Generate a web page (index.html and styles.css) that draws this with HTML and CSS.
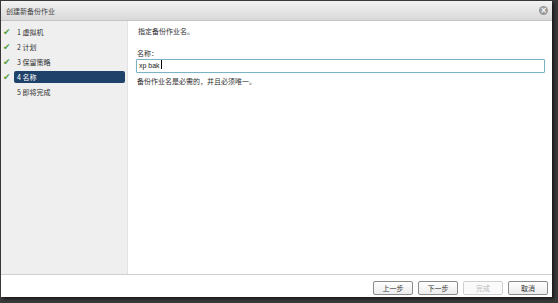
FILE: index.html
```html
<!DOCTYPE html>
<html lang="zh-CN">
<head>
  <meta charset="UTF-8">
  <title>创建新备份作业</title>
  <link rel="stylesheet" href="styles.css">
</head>
<body>

<div class="dialog">
  <div class="titlebar">
    <span class="title">创建新备份作业</span>
    <span class="close">×</span>
  </div>

  <div class="main">
    <div class="sidebar">
      <div class="step done"><span class="check">✔</span><span class="label">1 虚拟机</span></div>
      <div class="step done"><span class="check">✔</span><span class="label">2 计划</span></div>
      <div class="step done"><span class="check">✔</span><span class="label">3 保留策略</span></div>
      <div class="step done active"><span class="check">✔</span><span class="label">4 名称</span></div>
      <div class="step"><span class="check"></span><span class="label">5 即将完成</span></div>
    </div>

    <div class="content">
      <div class="intro">指定备份作业名。</div>
      <div class="field-label">名称：</div>
      <div class="field">xp bak<span class="caret"></span></div>
      <div class="hint">备份作业名是必需的，并且必须唯一。</div>
    </div>
  </div>

  <div class="footer">
    <button>上一步</button>
    <button>下一步</button>
    <button disabled>完成</button>
    <button>取消</button>
  </div>
</div>

</body>
</html>
```

FILE: styles.css
```css
body {
  margin: 0;
  width: 558px;
  height: 303px;
  background-color: #3a3a3a;
  font-family: "Noto Sans CJK SC", "Liberation Sans", sans-serif;
  font-size: 7px;
  color: #2e2e2e;
  overflow: hidden;
}
.dialog {
  width: 551px;
  height: 296px;
  margin: 1px 0 0 1px;
  background-color: #fff;
  display: flex;
  flex-direction: column;
  box-shadow: 2px 2px 3px rgba(0, 0, 0, 0.6);
}
.titlebar {
  height: 19px;
  flex-shrink: 0;
  display: flex;
  align-items: center;
  justify-content: space-between;
  padding: 0 4px 0 5px;
  background: linear-gradient(#f2f2f2, #d9d9d9);
  border-bottom: 1px solid #c4c4c4;
}
.title {
  color: #444;
}
.close {
  width: 9px;
  height: 9px;
  border-radius: 50%;
  background-color: #9a9a9a;
  color: #fff;
  font-size: 8px;
  line-height: 9px;
  text-align: center;
  font-family: "DejaVu Sans", sans-serif;
  font-weight: bold;
}
.main {
  flex: 1;
  display: flex;
}
.sidebar {
  width: 126px;
  flex-shrink: 0;
  padding-top: 3px;
  background-color: #efefef;
  border-right: 1px solid #e3e3e3;
}
.step {
  display: flex;
  align-items: center;
  height: 15px;
}
.check {
  width: 11px;
  padding-left: 2px;
  color: #4f9e3c;
  font-size: 9px;
  line-height: 12px;
  font-family: "DejaVu Sans", sans-serif;
}
.label {
  flex: 1;
  margin-right: 2px;
  padding-left: 3px;
  height: 12px;
  line-height: 12px;
  border-radius: 2px;
}
.step.active .label {
  background-color: #1f426b;
  color: #fff;
}
.content {
  flex: 1;
  padding: 4px 7px 0 8px;
}
.intro {
  line-height: 12px;
  padding-left: 2px;
}
.field-label {
  margin-top: 10px;
  line-height: 12px;
  padding-left: 1px;
}
.field {
  height: 12px;
  line-height: 12px;
  padding-left: 2px;
  border: 1px solid #7cb2c6;
  border-radius: 1px;
  box-shadow: 0 0 1px #a9d3e2;
  font-family: "Liberation Sans", sans-serif;
  color: #222;
}
.caret {
  display: inline-block;
  width: 1px;
  height: 9px;
  margin-left: 1px;
  vertical-align: -1px;
  background-color: #000;
}
.hint {
  margin-top: 2px;
  line-height: 12px;
  padding-left: 1px;
}
.footer {
  height: 23px;
  flex-shrink: 0;
  display: flex;
  justify-content: flex-end;
  align-items: flex-start;
  gap: 5px;
  padding: 6px 4px 0 0;
  box-sizing: border-box;
  border-top: 1px solid #cfcfcf;
}
button {
  width: 40px;
  height: 14px;
  padding: 0;
  font-family: inherit;
  font-size: 7px;
  color: #333;
  background: linear-gradient(#fff, #ececec);
  border: 1px solid #8a8a8a;
  border-radius: 2px;
}
button:disabled {
  color: #bbb;
  border-color: #cfcfcf;
  background: #fafafa;
}
```
